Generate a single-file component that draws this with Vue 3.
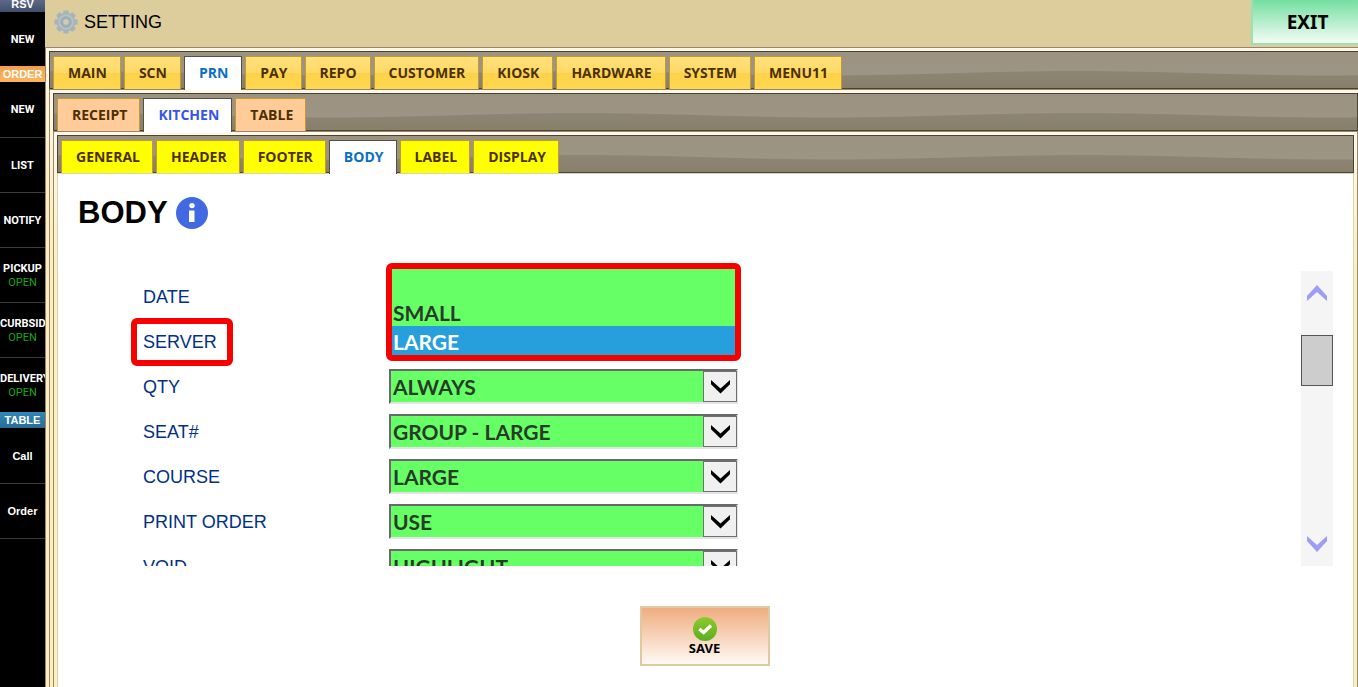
<script setup>
import { ref } from 'vue'

const sideItems = [
  { kind: 'head', tone: 'slate', label: 'RSV' },
  { kind: 'item', label: 'NEW', last: true },
  { kind: 'head', tone: 'orange', label: 'ORDER' },
  { kind: 'item', label: 'NEW', first: true },
  { kind: 'item', label: 'LIST' },
  { kind: 'item', label: 'NOTIFY' },
  { kind: 'item', label: 'PICKUP', state: 'OPEN' },
  { kind: 'item', label: 'CURBSIDE', state: 'OPEN' },
  { kind: 'item', label: 'DELIVERY', state: 'OPEN', last: true },
  { kind: 'head', tone: 'blue', label: 'TABLE' },
  { kind: 'item', label: 'Call', wide: true, first: true },
  { kind: 'item', label: 'Order', wide: true }
]

const mainTabs = ['MAIN', 'SCN', 'PRN', 'PAY', 'REPO', 'CUSTOMER', 'KIOSK', 'HARDWARE', 'SYSTEM', 'MENU11']
const printTabs = ['RECEIPT', 'KITCHEN', 'TABLE']
const kitchenTabs = ['GENERAL', 'HEADER', 'FOOTER', 'BODY', 'LABEL', 'DISPLAY']
const mainTab = ref('PRN')
const printTab = ref('KITCHEN')
const kitchenTab = ref('BODY')

const sizes = ['', 'SMALL', 'LARGE']
const server = ref('LARGE')
const fields = ref([
  { id: 'date', label: 'DATE', value: 'LARGE', options: sizes },
  { id: 'server', label: 'SERVER', open: true },
  { id: 'qty', label: 'QTY', value: 'ALWAYS', options: ['', 'ALWAYS'] },
  { id: 'seat', label: 'SEAT#', value: 'GROUP - LARGE', options: ['', 'GROUP - LARGE'] },
  { id: 'course', label: 'COURSE', value: 'LARGE', options: sizes },
  { id: 'print-order', label: 'PRINT ORDER', value: 'USE', options: ['', 'USE'] },
  { id: 'void', label: 'VOID', value: 'HIGHLIGHT', options: ['', 'HIGHLIGHT'] }
])
</script>

<template>
  <div class="app">
    <svg class="defs" width="0" height="0" aria-hidden="true">
      <defs>
        <linearGradient id="bar-shade" x1="0" y1="0" x2="0" y2="1">
          <stop offset="0" stop-color="#9b9282" />
          <stop offset="1" stop-color="#9e9686" />
        </linearGradient>
        <linearGradient id="wave-shade" x1="0" y1="0" x2="0" y2="1">
          <stop offset="0" stop-color="#8e8674" />
          <stop offset="1" stop-color="#877e6a" />
        </linearGradient>
        <pattern id="wave" width="500" height="38" patternUnits="userSpaceOnUse" x="26">
          <rect width="500" height="38" fill="url(#bar-shade)" />
          <path d="M0 19 C90 19 160 23.5 250 23.5 S410 19 500 19 V38 H0Z" fill="url(#wave-shade)" />
        </pattern>
      </defs>
    </svg>

    <nav class="side">
      <template v-for="(s, i) in sideItems" :key="i">
        <div v-if="s.kind === 'head'" class="side-head" :class="s.tone">{{ s.label }}</div>
        <button v-else class="side-item" :class="{ first: s.first, last: s.last, wide: s.wide }">
          <span>{{ s.label }}</span>
          <span v-if="s.state" class="state">{{ s.state }}</span>
        </button>
      </template>
    </nav>

    <main class="main">
      <header class="top">
        <svg class="gear" viewBox="0 0 24 24" aria-hidden="true">
          <g fill="#a6b5ba">
            <rect v-for="n in 8" :key="n" x="9.2" y="0.4" width="5.6" height="6" rx="1.4" :transform="`rotate(${n * 45} 12 12)`" />
          </g>
          <circle cx="12" cy="12" r="9.2" fill="#a6b5ba" />
          <circle cx="12" cy="12" r="6.6" fill="none" stroke="#b6c2c5" stroke-width="2" />
          <circle cx="12" cy="12" r="5" fill="none" stroke="#8fa2ab" stroke-width="0.8" />
          <circle cx="12" cy="12" r="3.4" fill="#c3cece" stroke="#94a6ad" stroke-width="0.8" />
          <circle cx="12" cy="12" r="1.8" fill="#decb9a" />
        </svg>
        <h1>SETTING</h1>
        <button class="exit">EXIT</button>
      </header>

      <section class="panel">
        <div class="bar gold">
          <svg class="wave" aria-hidden="true"><rect width="100%" height="100%" fill="url(#wave)" /></svg>
          <button v-for="t in mainTabs" :key="t" class="tab" :class="{ on: t === mainTab }" @click="mainTab = t">{{ t }}</button>
        </div>
        <section class="panel">
          <div class="bar peach">
            <svg class="wave" aria-hidden="true"><rect width="100%" height="100%" fill="url(#wave)" /></svg>
            <button v-for="t in printTabs" :key="t" class="tab" :class="{ on: t === printTab }" @click="printTab = t">{{ t }}</button>
          </div>
          <section class="panel">
            <div class="bar yellow">
              <svg class="wave" aria-hidden="true"><rect width="100%" height="100%" fill="url(#wave)" /></svg>
              <button v-for="t in kitchenTabs" :key="t" class="tab" :class="{ on: t === kitchenTab }" @click="kitchenTab = t">{{ t }}</button>
            </div>
            <form class="content" @submit.prevent>
              <div class="title">
                <h2>BODY</h2>
                <svg width="32" height="32" viewBox="0 0 32 32" role="img" aria-label="Information">
                  <circle cx="16" cy="16" r="16" fill="#4169e1" />
                  <circle cx="16" cy="8.6" r="2.7" fill="#fff" />
                  <path d="M13 13.5h5.5V25H13z" fill="#fff" />
                </svg>
              </div>

              <div class="scroll">
                <div class="rows">
                  <div v-for="f in fields" :key="f.id" class="row">
                    <label :for="f.id" :class="{ marked: f.open }">{{ f.label }}</label>
                    <div v-if="f.open" class="field">
                      <select :id="f.id" v-model="server" class="popup" size="3">
                        <option v-for="o in sizes" :key="o" :value="o">{{ o }}</option>
                      </select>
                    </div>
                    <div v-else class="field">
                      <select :id="f.id" v-model="f.value" class="drop">
                        <option v-for="o in f.options" :key="o">{{ o }}</option>
                      </select>
                      <span class="arrow">
                        <svg width="19" height="14" viewBox="0 0 19 14" aria-hidden="true">
                          <path d="M0 0V4.2L9.5 13.4 19 4.2V0L9.5 8.6Z" fill="#000" />
                        </svg>
                      </span>
                    </div>
                  </div>
                </div>
                <div class="track">
                  <button type="button" aria-label="Scroll up">
                    <svg width="20" height="16" viewBox="0 0 20 16"><path d="M0 11 10 0 20 11V16L10 7 0 16Z" fill="#9d9df8" /></svg>
                  </button>
                  <div class="thumb"></div>
                  <button type="button" class="down" aria-label="Scroll down">
                    <svg width="20" height="16" viewBox="0 0 20 16"><path d="M0 5 10 16 20 5V0L10 9 0 0Z" fill="#9d9df8" /></svg>
                  </button>
                </div>
              </div>

              <div class="actions">
                <button class="save">
                  <svg width="24" height="24" viewBox="0 0 24 24" aria-hidden="true">
                    <defs>
                      <linearGradient id="ok" x1="0" y1="0" x2="0" y2="1">
                        <stop offset="0" stop-color="#8fc92e" />
                        <stop offset="1" stop-color="#5cae20" />
                      </linearGradient>
                    </defs>
                    <circle cx="12" cy="12" r="12" fill="url(#ok)" />
                    <path d="M6.3 12 10.6 15.6 18 8.6" fill="none" stroke="#fff" stroke-width="3.4" />
                  </svg>
                  SAVE
                </button>
              </div>
            </form>
          </section>
        </section>
      </section>
    </main>
  </div>
</template>

<style>
body {
  margin: 0;
}
</style>

<style scoped>
.app {
  display: flex;
  height: 100vh;
  overflow: hidden;
  font-family: "Liberation Sans", Arial, sans-serif;
}
.app *,
.app *::after {
  box-sizing: border-box;
}
.defs {
  position: absolute;
}
button {
  margin: 0;
  padding: 0;
  border: 0;
  background: none;
  font: inherit;
  cursor: pointer;
}

.side {
  flex: none;
  width: 45px;
  background: #000;
  overflow: hidden;
}
.side-head {
  height: 16px;
  color: #fff;
  font-size: 11px;
  font-weight: bold;
  line-height: 16px;
  text-align: center;
}
.side-head.slate {
  height: 12px;
  line-height: 8px;
  background: linear-gradient(#5c6a86, #404d6d);
}
.side-head.orange {
  background: linear-gradient(#f0a04a, #ffb55c);
}
.side-head.blue {
  background: linear-gradient(#2f88b8, #2a6c98);
}
.side-item {
  display: flex;
  flex-direction: column;
  align-items: safe center;
  justify-content: center;
  width: 100%;
  height: 55px;
  padding-top: 2px;
  border-bottom: 1px solid #3c3c3c;
  color: #fff;
  font-family: Roboto, sans-serif;
  font-size: 11px;
  font-weight: bold;
  line-height: 14px;
}
.side-item.first {
  height: 56px;
  padding-top: 0;
}
.side-item.last {
  height: 54px;
  border-bottom: 0;
}
.side-item.wide {
  padding-top: 0;
  font-family: "Liberation Sans", Arial, sans-serif;
}
.state {
  color: #14a814;
  font-weight: normal;
}

.main {
  display: flex;
  flex: 1;
  flex-direction: column;
  min-width: 0;
  background: #decd9c;
}
.top {
  display: flex;
  align-items: center;
  height: 47px;
  padding-left: 9px;
  padding-bottom: 3px;
}
.gear {
  width: 24px;
  height: 24px;
}
h1 {
  flex: 1;
  margin: 0 0 0 6px;
  font-size: 18px;
  font-weight: normal;
}
.exit {
  align-self: flex-start;
  width: 107px;
  height: 45px;
  border: solid #9fe0ae;
  border-width: 0 0 2px 2px;
  padding: 0 0 0 4px;
  background: linear-gradient(#74dfa0, #f4fcf6);
  font: bold 19px "Noto Sans", sans-serif;
}

.panel {
  display: flex;
  flex: 1;
  flex-direction: column;
  min-height: 0;
  padding: 3px 3px 0;
  border: 1px solid #97866a;
  border-bottom: 0;
  background: #fdeebf linear-gradient(#fff8e8, #fdeebf) no-repeat 0 0 / 100% 140px;
}
.main > .panel {
  margin-right: -8px;
}
.bar {
  position: relative;
  display: flex;
  flex: none;
  gap: 3px;
  height: 38px;
  padding: 4px 3px 0;
  border: 1px solid #4a4335;
}
.wave {
  position: absolute;
  inset: 0;
  width: 100%;
  height: 100%;
}
.tab {
  position: relative;
  height: 33px;
  padding: 0 12px 2px 14px;
  border: 1px solid #c59a2c;
  border-bottom: 0;
  color: #4c3000;
  font: bold 14px "Open Sans", sans-serif;
  white-space: nowrap;
}
.gold .tab {
  padding-right: 13px;
  background: linear-gradient(#ffe07a, #fdd966 50%, #fdd24a 50%, #ffd74f);
}
.peach .tab {
  background: #ffcc99;
}
.yellow .tab {
  background: #ff0;
}
.bar .tab.on {
  height: 34px;
  padding-bottom: 3px;
  border-color: #55503f;
  background: #fff;
  color: #0a70c4;
}
.peach .tab.on {
  color: #3555e8;
}

.content {
  display: flex;
  flex: 1;
  flex-direction: column;
  min-height: 0;
  border: 1px solid #d4d4ba;
  border-bottom: 0;
  background: #fff;
}
.title {
  display: flex;
  align-items: center;
  gap: 8px;
  height: 78px;
  padding-left: 20px;
}
h2 {
  margin: 0;
  font-size: 31px;
}
.scroll {
  display: flex;
  flex: 1;
  justify-content: space-between;
  min-height: 0;
  margin: 10px 20px 0 65px;
  overflow: hidden;
}
.rows {
  padding: 12px 0 0 20px;
}
.row {
  display: flex;
  align-items: center;
  height: 45px;
}
label {
  position: relative;
  width: 246px;
  padding-top: 2px;
  color: #003087;
  font-size: 18px;
}
.marked::after {
  content: "";
  position: absolute;
  left: -12px;
  top: -12px;
  width: 102px;
  height: 48px;
  border: 6px solid #f90000;
  border-radius: 6px;
}
.field {
  position: relative;
  width: 349px;
  height: 35px;
}
.drop {
  appearance: none;
  width: 100%;
  height: 100%;
  padding: 0 36px 0 2px;
  border: 2px solid;
  border-color: #696969 #e3e3e3 #e3e3e3 #696969;
  border-radius: 0;
  background: #66ff66;
  color: #263c26;
  font: bold 21px Lato, sans-serif;
}
.arrow {
  position: absolute;
  top: 2px;
  right: 1px;
  display: grid;
  place-items: center;
  width: 34px;
  height: 31px;
  border: 1px solid #707070;
  background: #f0f0f0;
  pointer-events: none;
}
.popup {
  position: absolute;
  left: -3px;
  bottom: -2px;
  width: 355px;
  height: 98px;
  padding: 0;
  border: 6px solid #f90000;
  border-radius: 6px;
  outline: 0;
  background: #66ff66;
  color: #263c26;
  font: bold 21px Lato, sans-serif;
  overflow: hidden;
}
.popup option {
  height: 29px;
  min-height: 29px;
  padding: 3px 1px 0;
  font: inherit;
  line-height: 26px;
}
.popup option:checked {
  background: #269fdc linear-gradient(#269fdc, #269fdc);
  color: #fff;
  -webkit-text-fill-color: #fff;
}

.track {
  display: flex;
  flex-direction: column;
  align-items: center;
  width: 32px;
  margin-top: 9px;
  background: #f5f5f5;
}
.track button {
  flex: none;
  height: 44px;
}
.track svg {
  display: block;
}
.track .down {
  margin-top: auto;
}
.thumb {
  width: 100%;
  height: 51px;
  margin-top: 20px;
  border: 1px solid #555;
  background: #cdcdcd;
}
.actions {
  display: flex;
  flex: none;
  justify-content: center;
  height: 121px;
  padding: 40px 2px 0 0;
}
.save {
  display: flex;
  flex-direction: column;
  align-items: center;
  width: 130px;
  height: 60px;
  padding-top: 9px;
  border: 2px solid #e0c9a0;
  background: linear-gradient(#efad80, #fff9f4);
  font: bold 13px/15px "Noto Sans", sans-serif;
}
</style>
